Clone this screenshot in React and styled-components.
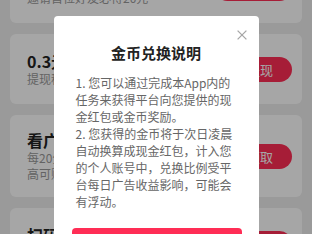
import React from "react";
import styled, { createGlobalStyle } from "styled-components";

const GlobalStyle = createGlobalStyle`
  * { box-sizing: border-box; }
  html, body {
    margin: 0;
    padding: 0;
    background: #ededed;
    font-family: "Noto Sans CJK SC", "Noto Sans", sans-serif;
    overflow: hidden;
  }
`;

const tasks = [
  { title: "邀请好友赚现金", desc: "邀请首位好友必得20元", action: "去邀请" },
  { title: "0.3元秒提现", desc: "提现秒到账，无门槛", action: "去提现" },
  {
    title: "看广告领金币",
    desc: "每20分钟可领一次金币奖励，最高可赚1000金币",
    action: "去领取",
  },
  { title: "扫码领红包", desc: "扫码即可领取现金红包", action: "去扫码" },
];

const rules = [
  "1. 您可以通过完成本App内的",
  "任务来获得平台向您提供的现",
  "金红包或金币奖励。",
  "2. 您获得的金币将于次日凌晨",
  "自动换算成现金红包，计入您",
  "的个人账号中，兑换比例受平",
  "台每日广告收益影响，可能会",
  "有浮动。",
];

const App = () => {
  return (
    <>
      <GlobalStyle />
      <Page>
        {/* page is scrolled: first card partly above the fold */}
        <TaskList>
          {tasks.map((t) => (
            <TaskCard key={t.title}>
              <TaskInfo>
                <TaskTitle>{t.title}</TaskTitle>
                <TaskDesc>{t.desc}</TaskDesc>
              </TaskInfo>
              <TaskButton>{t.action}</TaskButton>
            </TaskCard>
          ))}
        </TaskList>
      </Page>
      <Overlay>
        <Dialog>
          <CloseButton aria-label="关闭">
            <svg width="10" height="10" viewBox="0 0 10 10">
              <path
                d="M0.6 0.6 L9.4 9.4 M9.4 0.6 L0.6 9.4"
                stroke="#a6a6a6"
                strokeWidth="1.3"
                fill="none"
              />
            </svg>
          </CloseButton>
          <DialogTitle>金币兑换说明</DialogTitle>
          <DialogBody>
            {rules.map((line, i) => (
              <React.Fragment key={i}>
                {line}
                {i < rules.length - 1 && <br />}
              </React.Fragment>
            ))}
          </DialogBody>
          <ConfirmButton>我知道了</ConfirmButton>
        </Dialog>
      </Overlay>
    </>
  );
};

const Page = styled.div`
  width: 100%;
  height: 100vh;
  overflow: hidden;
`;

const TaskList = styled.div`
  display: flex;
  flex-direction: column;
  gap: 11px;
  padding: 0 10px;
  margin-top: -47px;
`;

const TaskCard = styled.div`
  display: flex;
  align-items: center;
  gap: 12px;
  min-height: 70px;
  padding: 15px 10px 15px 17px;
  background: #fff;
  border-radius: 6px;
`;

const TaskInfo = styled.div`
  flex: 1;
  min-width: 0;
  display: flex;
  flex-direction: column;
`;

const TaskTitle = styled.div`
  font-size: 16px;
  line-height: 20px;
  font-weight: 700;
  color: #222;
`;

const TaskDesc = styled.div`
  font-size: 12px;
  line-height: 16px;
  color: #999;
`;

const TaskButton = styled.button`
  flex: none;
  width: 77px;
  height: 25px;
  border: none;
  border-radius: 13px;
  background: #ff2d55;
  color: #fff;
  font-family: inherit;
  font-size: 13px;
  padding: 0;
`;

const Overlay = styled.div`
  position: fixed;
  inset: 0;
  background: rgba(0, 0, 0, 0.35);
  display: flex;
  justify-content: center;
  align-items: flex-start;
  padding-top: 16px;
`;

const Dialog = styled.div`
  position: relative;
  width: 205px;
  background: #fff;
  border-radius: 4px;
  padding: 26px 0 20px;
  display: flex;
  flex-direction: column;
`;

const CloseButton = styled.button`
  position: absolute;
  top: 14px;
  right: 12px;
  width: 10px;
  height: 10px;
  padding: 0;
  border: none;
  background: none;
  display: flex;
`;

const DialogTitle = styled.div`
  text-align: center;
  font-size: 15px;
  line-height: 22px;
  font-weight: 700;
  color: #222;
`;

const DialogBody = styled.div`
  margin-top: 10px;
  padding: 0 22px;
  font-size: 12px;
  line-height: 17px;
  color: #666;
  white-space: nowrap;
`;

const ConfirmButton = styled.button`
  margin: 18px 17px 0 18px;
  height: 40px;
  border: none;
  border-radius: 4px;
  background: #ff2d55;
  color: #fff;
  font-family: inherit;
  font-size: 15px;
`;

export default App;
